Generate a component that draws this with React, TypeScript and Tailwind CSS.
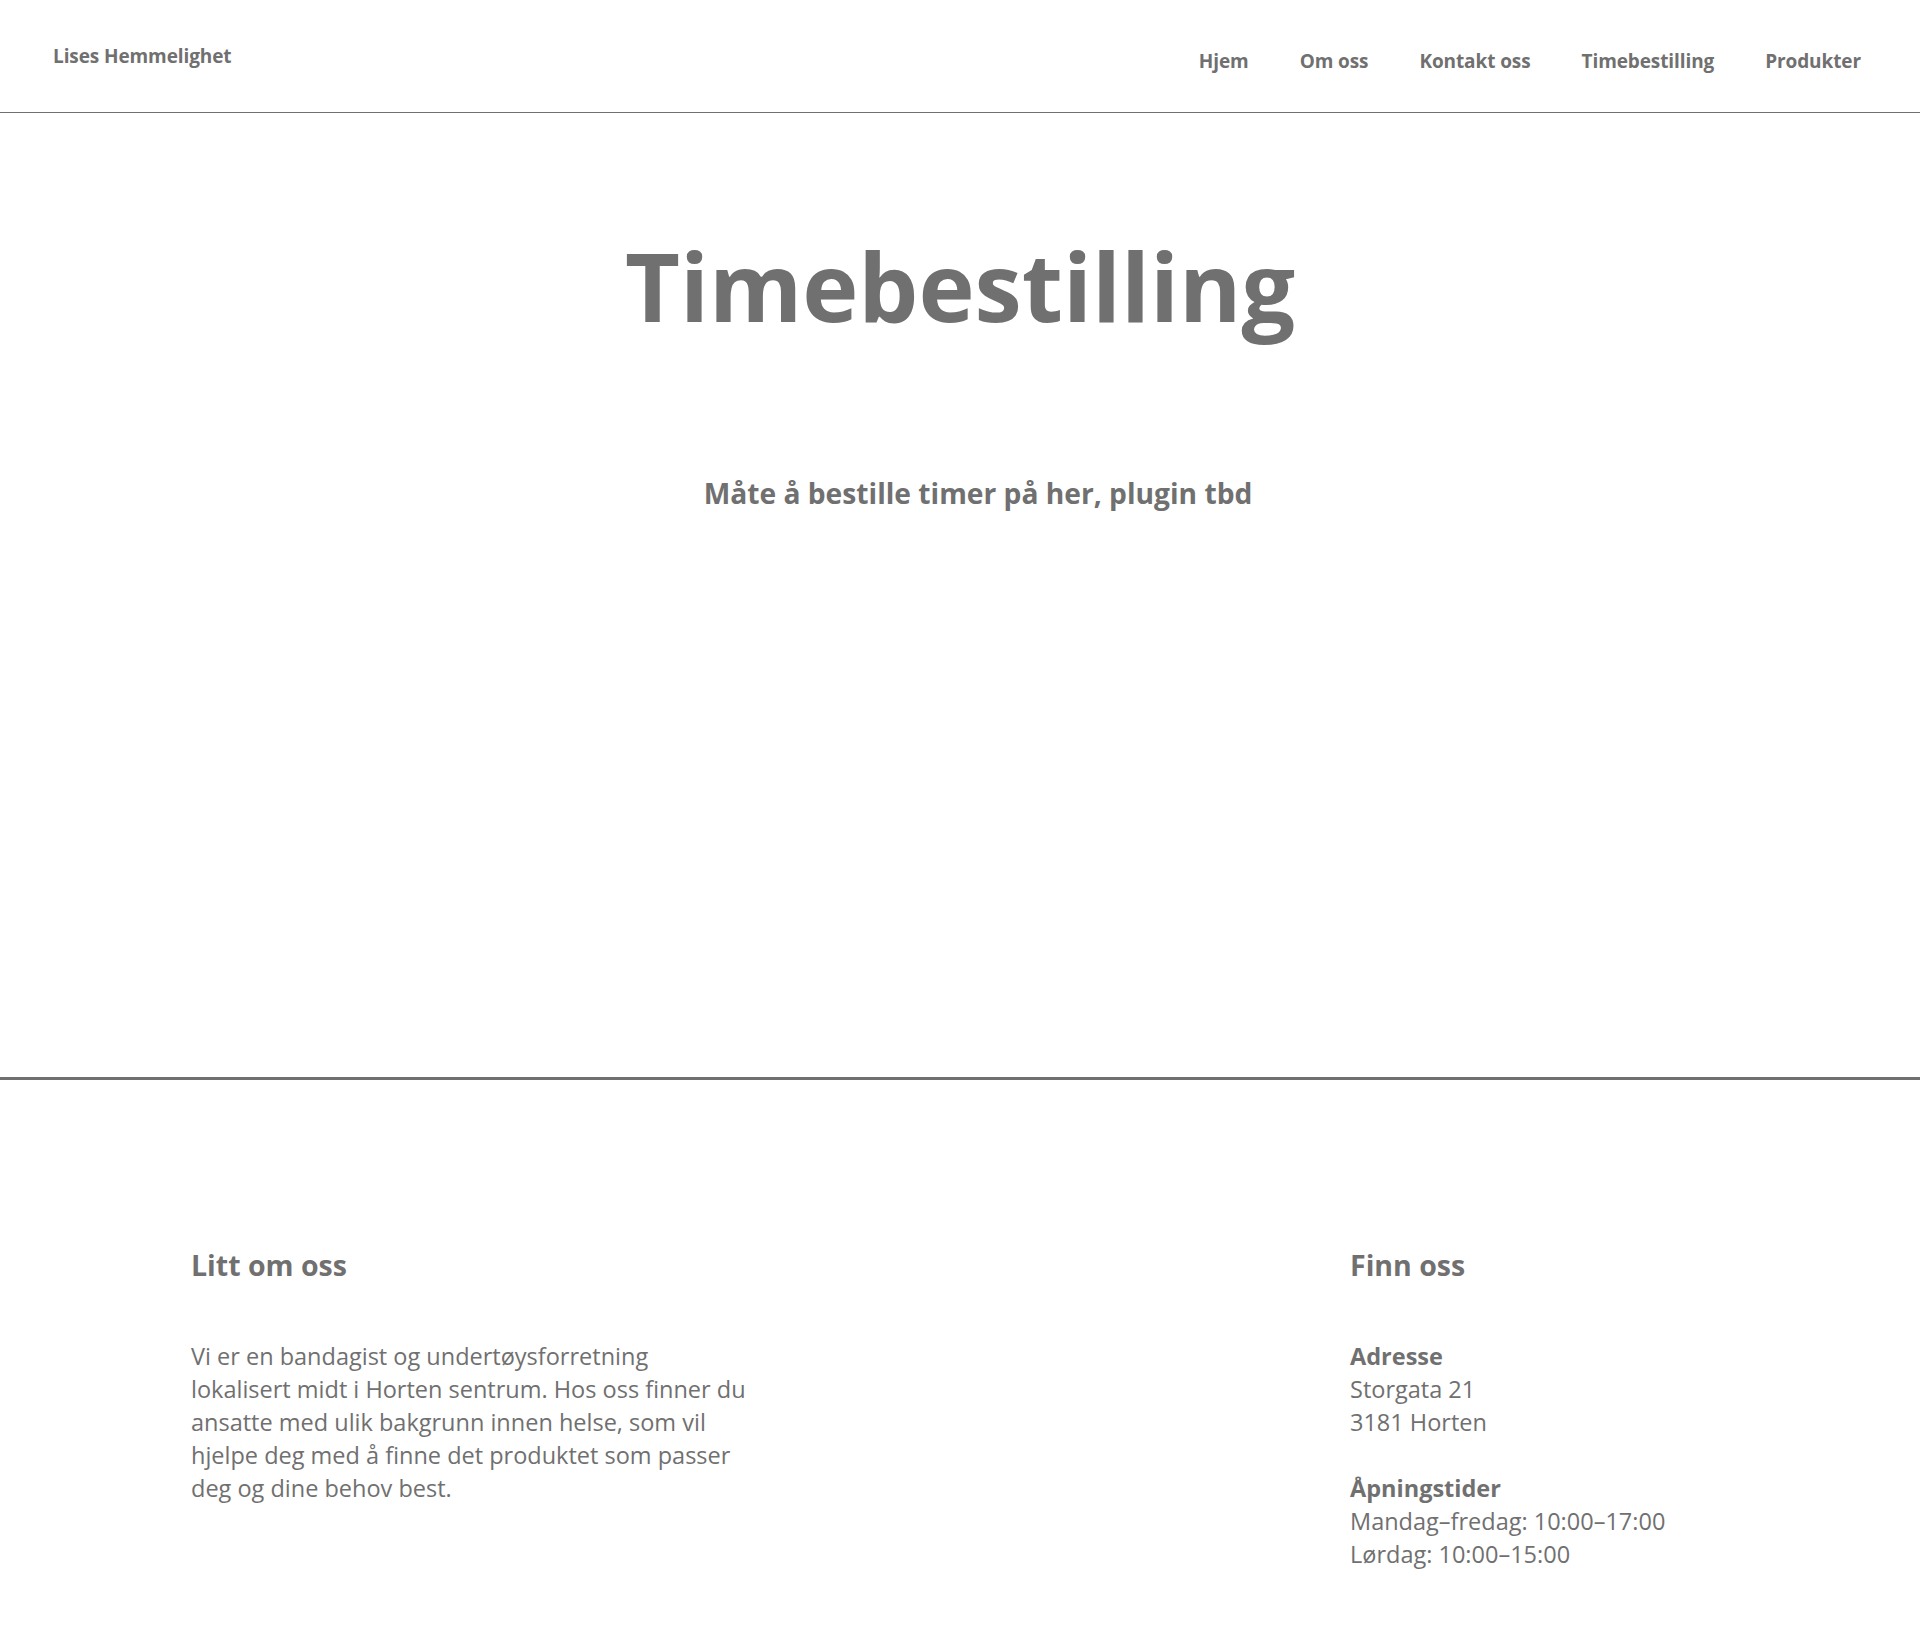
import React from "react";

export default function App() {
  const nav = ["Hjem", "Om oss", "Kontakt oss", "Timebestilling", "Produkter"];
  return (
    <div
      className="min-h-[1650px] w-full bg-white text-[#707070]"
      style={{ fontFamily: '"Open Sans", "Noto Sans", sans-serif' }}
    >
      <header className="flex h-[113px] items-start justify-between border-b border-[#707070] pl-[53px] pr-[59px]">
        <div className="mt-[47px] text-[19px] font-bold leading-none tracking-[-0.1px]">Lises Hemmelighet</div>
        <nav className="mt-[52px] flex gap-[51px] text-[19px] font-bold leading-none tracking-[-0.1px]">
          {nav.map((n) => (
            <a key={n} className="cursor-pointer">
              {n}
            </a>
          ))}
        </nav>
      </header>

      <main className="flex h-[967px] flex-col items-center border-b-[3px] border-[#707070]">
        <h1 className="mt-[125px] text-[95px] font-bold leading-none">Timebestilling</h1>
        <p className="mt-[146px] pl-[36px] text-[28.2px] font-bold leading-none">
          Måte å bestille timer på her, plugin tbd
        </p>
      </main>

      <footer className="flex justify-between px-[191px] pt-[171px] pb-[80px]">
        <div className="w-[600px]">
          <h2 className="text-[28.5px] font-bold leading-none">Litt om oss</h2>
          <p className="mt-[60px] text-[23.5px] leading-[33px]">
            Vi er en bandagist og undertøysforretning
            <br />
            lokalisert midt i Horten sentrum. Hos oss finner du
            <br />
            ansatte med ulik bakgrunn innen helse, som vil
            <br />
            hjelpe deg med å finne det produktet som passer
            <br />
            deg og dine behov best.
          </p>
        </div>
        <div className="w-[379px]">
          <h2 className="text-[28.5px] font-bold leading-none">Finn oss</h2>
          <div className="mt-[60px] text-[23.5px] leading-[33px]">
            <p className="font-bold">Adresse</p>
            <p>Storgata 21</p>
            <p>3181 Horten</p>
            <p className="mt-[33px] font-bold">Åpningstider</p>
            <p>Mandag–fredag: 10:00–17:00</p>
            <p>Lørdag: 10:00–15:00</p>
          </div>
        </div>
      </footer>
    </div>
  );
}
